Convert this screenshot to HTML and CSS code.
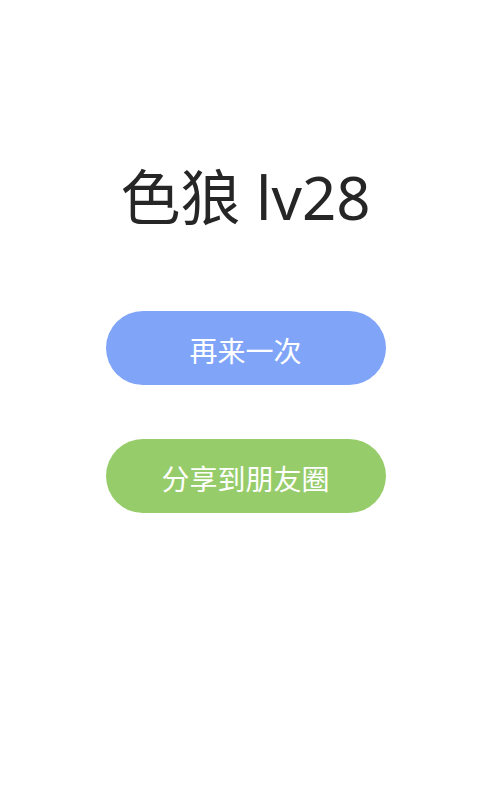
FILE: index.html
```html
<!DOCTYPE html>
<html lang="zh">
<head>
<meta charset="utf-8">
<link rel="stylesheet" href="styles.css">
</head>
<body>
<main class="page">
  <h1 class="title">色狼 lv28</h1>
  <div class="actions">
    <button class="btn btn-blue">再来一次</button>
    <button class="btn btn-green">分享到朋友圈</button>
  </div>
</main>
</body>
</html>
```
FILE: styles.css
```css
html, body {
  margin: 0;
  padding: 0;
  background: #ffffff;
}
body {
  font-family: "Noto Sans", "Noto Sans CJK SC", sans-serif;
}
.page {
  display: flex;
  flex-direction: column;
  align-items: center;
  padding-top: 159px;
  padding-left: 11px;
}
.title {
  margin: 0;
  font-size: 60px;
  font-weight: 400;
  line-height: 76px;
  color: #262626;
}
.actions {
  display: flex;
  flex-direction: column;
  gap: 54px;
  margin-top: 76px;
}
.btn {
  width: 280px;
  height: 74px;
  border: none;
  border-radius: 37px;
  color: #ffffff;
  font-family: "Noto Sans CJK SC", sans-serif;
  font-size: 28px;
  padding: 4px 0 0;
  margin: 0;
}
.btn-blue { background: #80a5f8; }
.btn-green { background: #97cc6b; }
```
